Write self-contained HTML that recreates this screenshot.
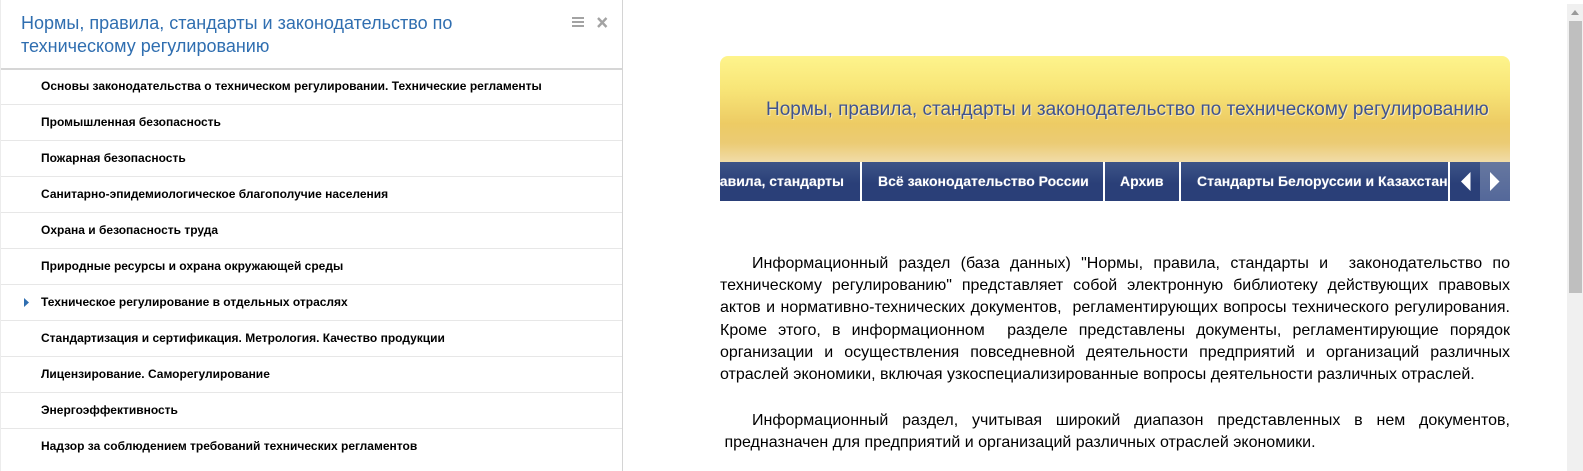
<!DOCTYPE html>
<html lang="ru"><head><meta charset="utf-8"><title>Нормы</title>
<style>
html,body{margin:0;padding:0;background:#fff;width:1583px;height:471px;overflow:hidden;font-family:"Liberation Sans",sans-serif}
.a{position:absolute;white-space:nowrap}
#panel{position:absolute;left:0;top:0;width:621px;height:471px;border-right:1px solid #d4d4d4;border-left:1px solid #ececec;box-sizing:content-box;overflow:hidden}
#t{position:absolute;left:20px;top:12px;font-size:18px;line-height:23px;color:#2f6eb0;width:500px}
#hr{position:absolute;left:0;top:68px;width:621px;height:2px;background:#d6d6d6}
.r{position:absolute;left:0;width:621px;height:1px;background:#e7e7e7}
.m{position:absolute;left:40px;font-size:12px;font-weight:bold;color:#000;line-height:16px;white-space:nowrap}
#ban{position:absolute;left:720px;top:56px;width:790px;height:106px;border-radius:8px 8px 0 0;background:linear-gradient(#fef48c 0,#f8e678 30%,#edcb64 64%,#ebcb74 82%,#f1dca8 100%)}
#bt{position:absolute;left:766px;top:99px;font-size:19px;line-height:22px;color:#3f538f;text-shadow:1px 1px 0 #fff8;white-space:nowrap}
#nav{position:absolute;left:720px;top:162px;width:790px;height:39px;overflow:hidden}
.b{position:absolute;top:0;height:39px;background:linear-gradient(#3d5487,#2a3f78 55%);color:#fff;font-size:14px;font-weight:bold;line-height:39px;white-space:nowrap;overflow:hidden;text-shadow:0 0 1px #ffffff66}
.l{position:absolute;left:720px;width:790px;font-size:16px;line-height:22px;color:#000;text-align:justify;text-align-last:justify;white-space:nowrap}
.e{text-align-last:left}
</style></head><body>
<div id="panel">
<div id="t">Нормы, правила, стандарты и законодательство по техническому регулированию</div>
<svg class="a" style="left:571px;top:16px" width="40" height="14"><g fill="#a3a3a3"><rect x="0" y="1" width="12" height="2"/><rect x="0" y="5" width="12" height="2"/><rect x="0" y="9" width="12" height="2"/></g><path d="M26 2l8.500 9M34.500 2l-8.500 9" stroke="#a3a3a3" stroke-width="2.400" fill="none"/></svg>
<div id="hr"></div>
<div class="m" style="top:78px">Основы законодательства о техническом регулировании. Технические регламенты</div><div class="r" style="top:104px"></div>
<div class="m" style="top:114px">Промышленная безопасность</div><div class="r" style="top:140px"></div>
<div class="m" style="top:150px">Пожарная безопасность</div><div class="r" style="top:176px"></div>
<div class="m" style="top:186px">Санитарно-эпидемиологическое благополучие населения</div><div class="r" style="top:212px"></div>
<div class="m" style="top:222px">Охрана и безопасность труда</div><div class="r" style="top:248px"></div>
<div class="m" style="top:258px">Природные ресурсы и охрана окружающей среды</div><div class="r" style="top:284px"></div>
<div class="m" style="top:294px">Техническое регулирование в отдельных отраслях</div><div class="r" style="top:320px"></div>
<svg class="a" style="left:23px;top:298px" width="6" height="9"><path d="M0 0L5 4.500L0 9Z" fill="#2f6eb0"/></svg>
<div class="m" style="top:330px">Стандартизация и сертификация. Метрология. Качество продукции</div><div class="r" style="top:356px"></div>
<div class="m" style="top:366px">Лицензирование. Саморегулирование</div><div class="r" style="top:392px"></div>
<div class="m" style="top:402px">Энергоэффективность</div><div class="r" style="top:428px"></div>
<div class="m" style="top:438px">Надзор за соблюдением требований технических регламентов</div>
</div>
<div id="ban"></div>
<div id="bt">Нормы, правила, стандарты и законодательство по техническому регулированию</div>
<div id="nav">
<div class="b" style="left:0;width:140px"><span style="position:absolute;right:16px">Нормы, правила, стандарты</span></div>
<div class="b" style="left:142px;width:241px;text-indent:16px">Всё законодательство России</div>
<div class="b" style="left:385px;width:74px;text-indent:15px">Архив</div>
<div class="b" style="left:461px;width:267px;text-indent:16px">Стандарты Белоруссии и Казахстана</div>
<div class="b" style="left:730px;width:30px"></div>
<div class="b" style="left:760px;width:30px;background:linear-gradient(#66779f,#54689a)"></div>
<svg class="a" style="left:741px;top:10px" width="40" height="19"><path d="M9.500 0L0 9.500L9.500 19Z M29 0L38.500 9.500L29 19Z" fill="#fff"/></svg>
</div>
<div class="l" style="top:253px;text-indent:32px">Информационный раздел (база данных) "Нормы, правила, стандарты и &nbsp;законодательство по</div>
<div class="l" style="top:275px">техническому регулированию" представляет собой электронную библиотеку действующих правовых</div>
<div class="l" style="top:297px">актов и нормативно-технических документов, &nbsp;регламентирующих вопросы технического регулирования.</div>
<div class="l" style="top:320px">Кроме этого, в информационном &nbsp;разделе представлены документы, регламентирующие порядок</div>
<div class="l" style="top:342px">организации и осуществления повседневной деятельности предприятий и организаций различных</div>
<div class="l e" style="top:364px">отраслей экономики, включая узкоспециализированные вопросы деятельности различных отраслей.</div>
<div class="l" style="top:410px;text-indent:32px">Информационный раздел, учитывая широкий диапазон представленных в нем документов,</div>
<div class="l e" style="top:432px">&nbsp;предназначен для предприятий и организаций различных отраслей экономики.</div>
<div class="a" style="left:1567px;top:4px;width:16px;height:467px;background:#f0f0f0"></div>
<div class="a" style="left:1569px;top:21px;width:13px;height:272px;background:#bfbfbf"></div>
<svg class="a" style="left:1571px;top:10px" width="8" height="6"><path d="M4 0L8 5H0Z" fill="#9a9a9a"/></svg>
</body></html>
